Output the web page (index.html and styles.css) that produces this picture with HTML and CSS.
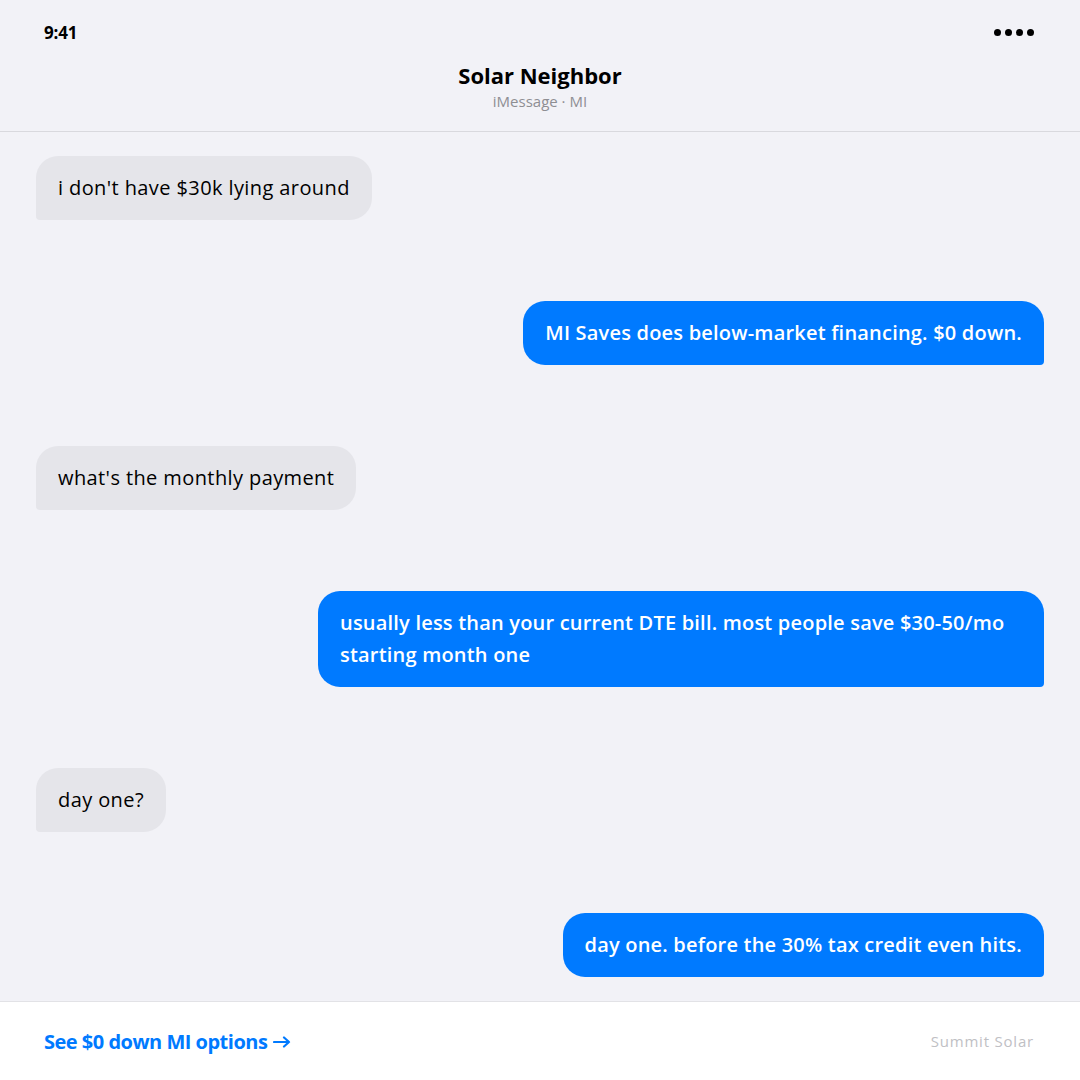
FILE: index.html
```html
<!DOCTYPE html>
<html lang="en">
<head>
   <meta charset="UTF-8">
   <meta name="viewport" content="width=device-width, initial-scale=1.0">
   <title>Solar Neighbor</title>
   <link rel="stylesheet" href="styles.css">
</head>
<body>
<div class="phone">
   <header class="top">
      <div class="status">
         <span class="time">9:41</span>
         <span class="dots">
            <i></i><i></i><i></i><i></i>
         </span>
      </div>
      <div class="contact">
         <h1>Solar Neighbor</h1>
         <p>iMessage · MI</p>
      </div>
   </header>

   <main class="thread">
      <div class="msg them">i don't have $30k lying around</div>
      <div class="msg me">MI Saves does below-market financing. $0 down.</div>
      <div class="msg them">what's the monthly payment</div>
      <div class="msg me">usually less than your current DTE bill. most people save $30-50/mo starting month one</div>
      <div class="msg them">day one?</div>
      <div class="msg me">day one. before the 30% tax credit even hits.</div>
   </main>

   <footer class="bottom">
      <a class="cta" href="#">See $0 down MI options
         <svg class="arrow" width="18" height="12" viewBox="0 0 18 12">
            <path d="M1 6h15M11 1.5l5 4.5-5 4.5" fill="none" stroke="currentColor" stroke-width="2.2" stroke-linecap="round" stroke-linejoin="round"/>
         </svg>
      </a>
      <span class="brand">Summit Solar</span>
   </footer>
</div>
</body>
</html>
```

FILE: styles.css
```css
body {
   margin: 0;
   padding: 0;
   font-family: "Open Sans", "Noto Sans", sans-serif;
   background-color: #f2f2f7;
   color: #000;
}
.phone {
   display: flex;
   flex-direction: column;
   height: 1080px;
}
.top {
   border-bottom: 1px solid #d9d9de;
   padding: 0 44px 0 44px;
   height: 131px;
}
.status {
   display: flex;
   justify-content: space-between;
   align-items: center;
   height: 64px;
}
.time {
   font-size: 17px;
   font-weight: 700;
   letter-spacing: -0.2px;
}
.dots {
   display: flex;
   gap: 4px;
   padding-right: 2px;
}
.dots i {
   width: 7px;
   height: 7px;
   border-radius: 50%;
   background-color: #000;
}
.contact {
   text-align: center;
}
.contact h1 {
   margin: 0;
   font-size: 22px;
   font-weight: 700;
   line-height: 24px;
   margin-top: -1px;
}
.contact p {
   margin: 4px 0 0;
   font-size: 15px;
   line-height: 20px;
   color: #8e8e93;
}
.thread {
   flex: 1;
   display: flex;
   flex-direction: column;
   justify-content: space-between;
   padding: 24px 36px;
}
.msg {
   max-width: 682px;
   padding: 16px 22px;
   font-size: 20px;
   line-height: 32px;
   border-radius: 22px;
}
.them {
   align-self: flex-start;
   background-color: #e5e5ea;
   color: #000;
   letter-spacing: 0.4px;
   border-bottom-left-radius: 4px;
}
.me {
   align-self: flex-end;
   background-color: #007aff;
   color: #fff;
   font-weight: 600;
   letter-spacing: 0.2px;
   border-bottom-right-radius: 4px;
}
.bottom {
   background-color: #fff;
   border-top: 1px solid #e2e2e6;
   height: 78px;
   display: flex;
   justify-content: space-between;
   align-items: center;
   padding: 0 46px 0 44px;
}
.cta {
   display: flex;
   align-items: center;
   gap: 6px;
   color: #007aff;
   font-size: 20px;
   font-weight: 700;
   text-decoration: none;
   letter-spacing: -0.5px;
}
.arrow {
   margin-top: 1px;
}
.brand {
   color: #c0c0c4;
   font-size: 15px;
   letter-spacing: 0.8px;
}
```
